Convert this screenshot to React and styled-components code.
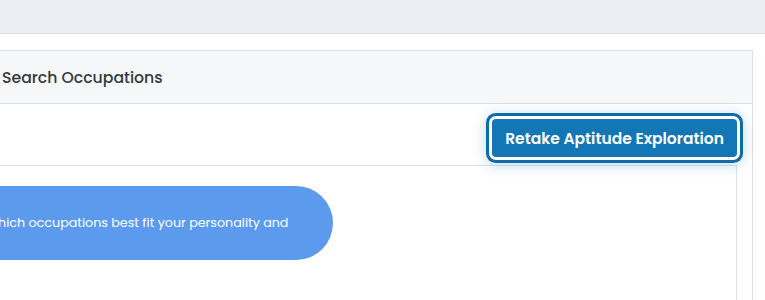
import React from "react";
import styled, { createGlobalStyle } from "styled-components";

const GlobalStyle = createGlobalStyle`
  html, body {
    margin: 0;
    padding: 0;
    background: #ffffff;
    overflow: hidden;
  }
  body {
    font-family: "Poppins", "Open Sans", "Liberation Sans", sans-serif;
  }
  * {
    box-sizing: border-box;
  }
`;

const TopBar = styled.div`
  height: 34px;
  background: #eaedf2;
  border-bottom: 1px solid #d9dee4;
`;

const Main = styled.main`
  padding: 16px 12px 0 0;
  margin-left: -120px;
`;

const Panel = styled.section`
  border: 1px solid #d9e0e6;
  border-bottom: none;
`;

const PanelHeader = styled.header`
  height: 53px;
  display: flex;
  align-items: center;
  padding-left: 121px;
  background: #f6f7f9;
  border-bottom: 1px solid #d9e0e6;

  h2 {
    margin: 0;
    font-size: 15.7px;
    font-weight: 500;
    color: #333a40;
  }
`;

const PanelBody = styled.div`
  padding: 0 15px;
`;

const Toolbar = styled.div`
  display: flex;
  justify-content: flex-end;
  padding: 15px 0 8px;
`;

const RetakeButton = styled.button`
  height: 38px;
  padding: 0 13px;
  border: none;
  border-radius: 4px;
  background: #1477b5;
  color: #ffffff;
  font-family: inherit;
  font-size: 15.5px;
  font-weight: 600;
  cursor: pointer;
  box-shadow: 0 0 0 3px #ffffff, 0 0 0 6px #0f6ca8, 0 2px 14px 6px rgba(20, 119, 181, 0.28);
`;

const InnerBox = styled.div`
  border: 1px solid #dbe3e9;
  border-bottom: none;
  padding: 20px;
  height: 136px;
`;

const Pill = styled.div`
  display: inline-flex;
  align-items: center;
  height: 74px;
  padding: 0 45px 0 13px;
  border-radius: 37px;
  background: #5b9aec;
  color: #ffffff;
  font-size: 12.7px;
  font-weight: 400;
`;

export default function App() {
  return (
    <>
      <GlobalStyle />
      <TopBar />
      <Main>
        <Panel>
          <PanelHeader>
            <h2>Search Occupations</h2>
          </PanelHeader>
          <PanelBody>
            <Toolbar>
              <RetakeButton>Retake Aptitude Exploration</RetakeButton>
            </Toolbar>
            <InnerBox>
              <Pill>Discover which occupations best fit your personality and</Pill>
            </InnerBox>
          </PanelBody>
        </Panel>
      </Main>
    </>
  );
}
